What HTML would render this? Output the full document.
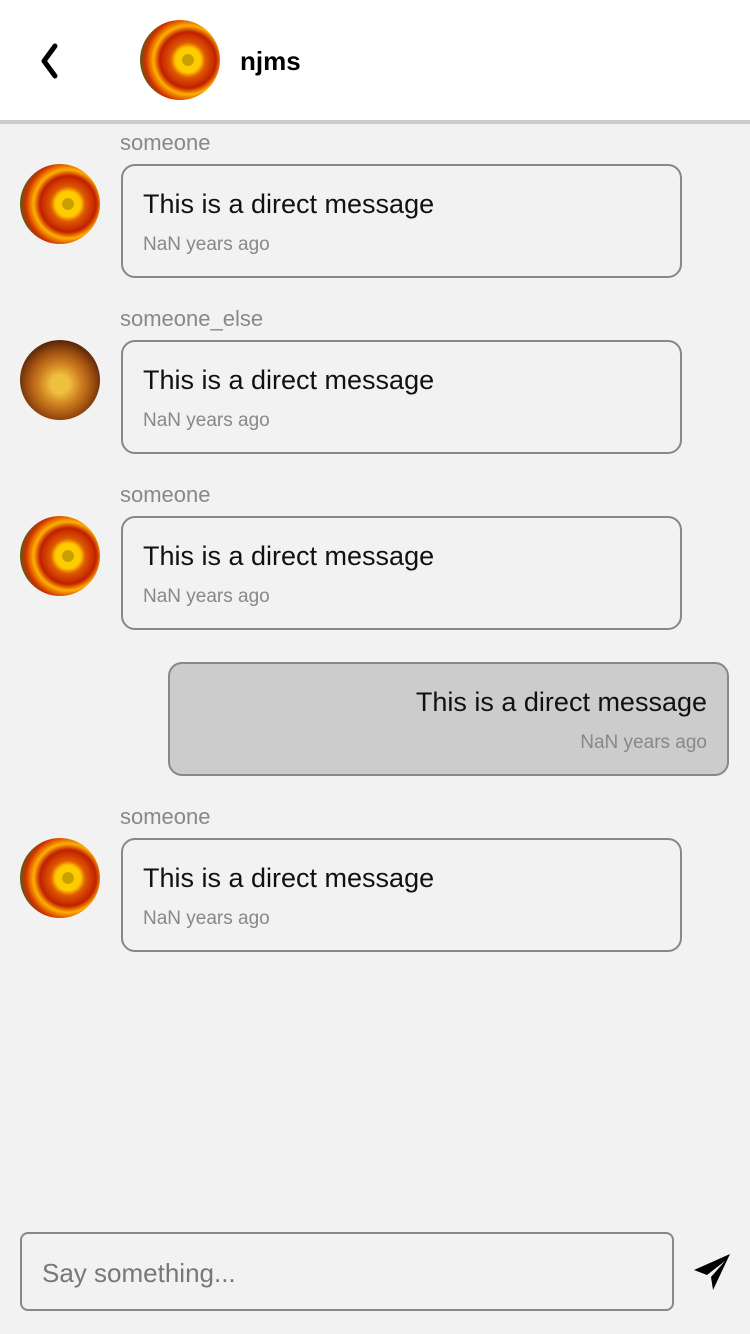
<!DOCTYPE html><html><head><style>
*{margin:0;padding:0;box-sizing:border-box}
body{width:750px;height:1334px;background:#f2f2f2;font-family:"Liberation Sans",sans-serif;position:relative;overflow:hidden}
.hdr{position:absolute;left:0;top:0;width:750px;height:124px;background:#fff;border-bottom:4px solid #ccc}
.av{position:absolute;border-radius:50%;overflow:hidden;background:radial-gradient(circle at 60% 50%,#c8a000 0 9%,#ffcc00 10% 20%,#e05a00 28%,#c02000 45%,#ffb000 55%,#d03000 68%,#2a6a1a 80%,#a04080 100%)}
.av2{background:radial-gradient(circle at 50% 55%,#f0c040 0 15%,#d08020 35%,#a05010 55%,#502008 75%,#201008 100%)}
.name{position:absolute;left:120px;font-size:22px;color:#888}
.b{position:absolute;left:121px;width:561px;height:114px;border:2px solid #888;border-radius:14px;background:#f2f2f2}
.b .t{position:absolute;left:20px;top:23px;font-size:27px;color:#111}
.b .s{position:absolute;left:20px;top:68px;font-size:19px;color:#888}
.me{left:168px;background:#ccc}
.me .t,.me .s{left:auto;right:20px}
</style></head><body>
<div class="hdr">
<svg style="position:absolute;left:36px;top:42px" width="26" height="38"><path d="M19 4 L8 19 L19 34" fill="none" stroke="#000" stroke-width="5" stroke-linecap="round" stroke-linejoin="round"/></svg>
<div class="av" style="left:140px;top:20px;width:80px;height:80px"></div>
<div style="position:absolute;left:240px;top:46px;font-size:26px;font-weight:bold">njms</div>
</div>

<div class="name" style="top:130px">someone</div>
<div class="av" style="left:20px;top:164px;width:80px;height:80px"></div>
<div class="b" style="top:164px"><div class="t">This is a direct message</div><div class="s">NaN years ago</div></div>

<div class="name" style="top:306px">someone_else</div>
<div class="av av2" style="left:20px;top:340px;width:80px;height:80px"></div>
<div class="b" style="top:340px"><div class="t">This is a direct message</div><div class="s">NaN years ago</div></div>

<div class="name" style="top:482px">someone</div>
<div class="av" style="left:20px;top:516px;width:80px;height:80px"></div>
<div class="b" style="top:516px"><div class="t">This is a direct message</div><div class="s">NaN years ago</div></div>

<div class="b me" style="top:662px"><div class="t">This is a direct message</div><div class="s">NaN years ago</div></div>

<div class="name" style="top:804px">someone</div>
<div class="av" style="left:20px;top:838px;width:80px;height:80px"></div>
<div class="b" style="top:838px"><div class="t">This is a direct message</div><div class="s">NaN years ago</div></div>

<div style="position:absolute;left:20px;top:1232px;width:654px;height:79px;border:2px solid #888;border-radius:8px;background:#f2f2f2"><div style="position:absolute;left:20px;top:24px;font-size:26px;color:#777">Say something...</div></div>
<svg style="position:absolute;left:0;top:0" width="750" height="1334"><path d="M694 1270 L730 1254 L713 1290 L711 1277 L725 1261 L707 1275 Z" fill="#000"/></svg>
</body></html>
